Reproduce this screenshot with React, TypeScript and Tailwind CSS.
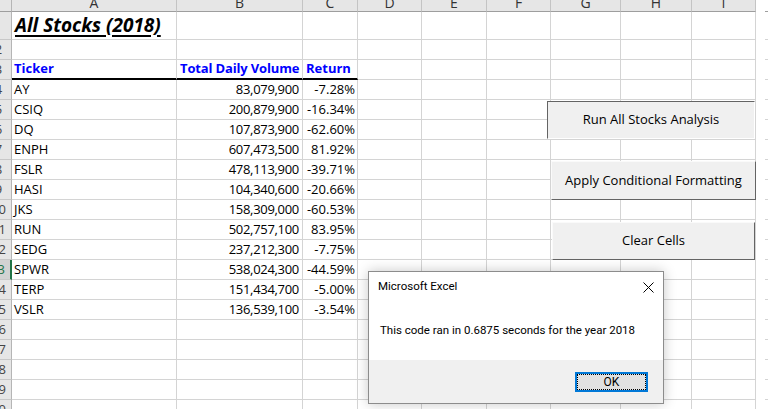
import { Fragment } from "react";
import clsx from "clsx";

type Stock = { ticker: string; volume: string; ret: string };

// 2018 results, rows 4-15 of the sheet
const stocks: Stock[] = [
	{ ticker: "AY", volume: "83,079,900", ret: "-7.28%" },
	{ ticker: "CSIQ", volume: "200,879,900", ret: "-16.34%" },
	{ ticker: "DQ", volume: "107,873,900", ret: "-62.60%" },
	{ ticker: "ENPH", volume: "607,473,500", ret: "81.92%" },
	{ ticker: "FSLR", volume: "478,113,900", ret: "-39.71%" },
	{ ticker: "HASI", volume: "104,340,600", ret: "-20.66%" },
	{ ticker: "JKS", volume: "158,309,000", ret: "-60.53%" },
	{ ticker: "RUN", volume: "502,757,100", ret: "83.95%" },
	{ ticker: "SEDG", volume: "237,212,300", ret: "-7.75%" },
	{ ticker: "SPWR", volume: "538,024,300", ret: "-44.59%" },
	{ ticker: "TERP", volume: "151,434,700", ret: "-5.00%" },
	{ ticker: "VSLR", volume: "136,539,100", ret: "-3.54%" },
];

const columns = ["A", "B", "C", "D", "E", "F", "G", "H", "I"];
const rowNums = Array.from({ length: 20 }, (_, i) => i + 1);

const cell =
	"flex items-end whitespace-nowrap border-r border-b border-[#d4d4d4] leading-normal";

function SheetRow({ n }: { n: number }) {
	const stock = n >= 4 && n <= 15 ? stocks[n - 4] : null;
	const isHead = n === 3;
	const headCls = "font-bold text-[#0000ff] border-b-2 border-b-black";

	return (
		<>
			{/* row number, cut off on the left */}
			<div
				className={clsx(
					"flex justify-end overflow-hidden border-b border-b-[#c8c8c8] border-r",
					n === 13
						? "bg-[#d2d2d2] border-r-2 border-r-[#217346] text-[#217346]"
						: "bg-[#e6e6e6] border-r-[#b5b5b5] text-[#444]",
				)}
			>
				<span className="w-[25px] shrink-0 text-center leading-[19px] self-center">
					{n}
				</span>
			</div>

			{/* A */}
			<div className={clsx(cell, "pl-[2px]", isHead && headCls)}>
				{n === 1 && (
					<span className="pl-[1px] text-[19px] font-bold italic underline decoration-[1.5px] underline-offset-[3px]">
						All Stocks (2018)
					</span>
				)}
				{isHead && "Ticker"}
				{stock?.ticker}
			</div>

			{/* B */}
			<div
				className={clsx(
					cell,
					isHead
						? "pl-[3px] tracking-[-0.15px]"
						: "justify-end pr-[3px] tracking-[-0.3px]",
					isHead && headCls,
				)}
			>
				{isHead && "Total Daily Volume"}
				{stock?.volume}
			</div>

			{/* C */}
			<div
				className={clsx(
					cell,
					isHead ? "pl-[3px]" : "justify-end pr-[2px]",
					isHead && headCls,
				)}
			>
				{isHead && "Return"}
				{stock?.ret}
			</div>

			{/* D - I empty */}
			{columns.slice(3).map((c) => (
				<div key={c} className={cell} />
			))}

			{/* partial column past I */}
			<div className="flex items-end justify-end">
				<div className="w-[3px] h-px bg-[#d4d4d4]" />
			</div>
		</>
	);
}

export default function App() {
	return (
		<div className="relative w-[768px] h-[409px] overflow-hidden bg-white font-['Open_Sans',sans-serif] text-[13px] text-black">
			<div className="grid grid-cols-[12px_165px_126px_55px_64px_65px_64px_70px_71px_64px_12px] grid-rows-[12px_28px_repeat(20,20px)]">
				{/* column letters */}
				<div className="bg-[#e6e6e6] border-r border-b border-r-[#b5b5b5] border-b-[#9e9e9e]" />
				{columns.map((c) => (
					<div
						key={c}
						className="h-[12px] overflow-hidden flex justify-center bg-[#e6e6e6] border-r border-r-[#c4c4c4] border-b border-b-[#9e9e9e]"
					>
						<span className="-mt-[4px] leading-[14px] text-[14px] text-[#333]">
							{c}
						</span>
					</div>
				))}
				<div className="flex items-end justify-end">
					<div className="w-[3px] h-px bg-[#9e9e9e]" />
				</div>

				{rowNums.map((n) => (
					<Fragment key={n}>
						<SheetRow n={n} />
					</Fragment>
				))}
			</div>

			{/* macro buttons */}
			<div className="absolute left-[547px] top-[101px] w-[208px] h-[38px] flex items-center justify-center bg-[#f0f0f0] border border-t-[#646464] border-l-[#646464] border-r-white border-b-white">
				Run All Stocks Analysis
			</div>
			<div className="absolute left-[551px] top-[161px] w-[205px] h-[39px] flex items-center justify-center bg-[#f0f0f0] border border-t-[#fafafa] border-l-[#fafafa] border-r-[#646464] border-b-[#646464]">
				Apply Conditional Formatting
			</div>
			<div className="absolute left-[552px] top-[222px] w-[203px] h-[38px] flex items-center justify-center bg-[#f0f0f0] border border-t-[#fafafa] border-l-[#fafafa] border-r-[#646464] border-b-[#646464]">
				Clear Cells
			</div>

			{/* message box */}
			<div className="absolute left-[368px] top-[271px] w-[296px] h-[133px] flex flex-col bg-white border border-[#8c8c8c] shadow-[0_0_12px_rgba(0,0,0,0.22)] font-['Roboto',sans-serif] text-[11.5px] text-black">
				<div className="h-[30px] flex items-center justify-between pl-[9px] pr-[9px]">
					<span>Microsoft Excel</span>
					<svg width="11" height="11" viewBox="0 0 11 11">
						<path
							d="M0.5 0.5 L10.5 10.5 M10.5 0.5 L0.5 10.5"
							stroke="#000"
							strokeWidth="1"
						/>
					</svg>
				</div>
				<div className="h-[58px] flex items-center pl-[11px]">
					This code ran in 0.6875 seconds for the year 2018
				</div>
				<div className="flex-1 bg-[#f0f0f0] flex items-center justify-end pr-[15px]">
					<div className="w-[73px] h-[20px] border-2 border-[#0078d7] bg-[#e1e1e1]">
						<div className="h-full border border-dotted border-black flex items-center justify-center text-[12px]">
							OK
						</div>
					</div>
				</div>
			</div>
		</div>
	);
}
